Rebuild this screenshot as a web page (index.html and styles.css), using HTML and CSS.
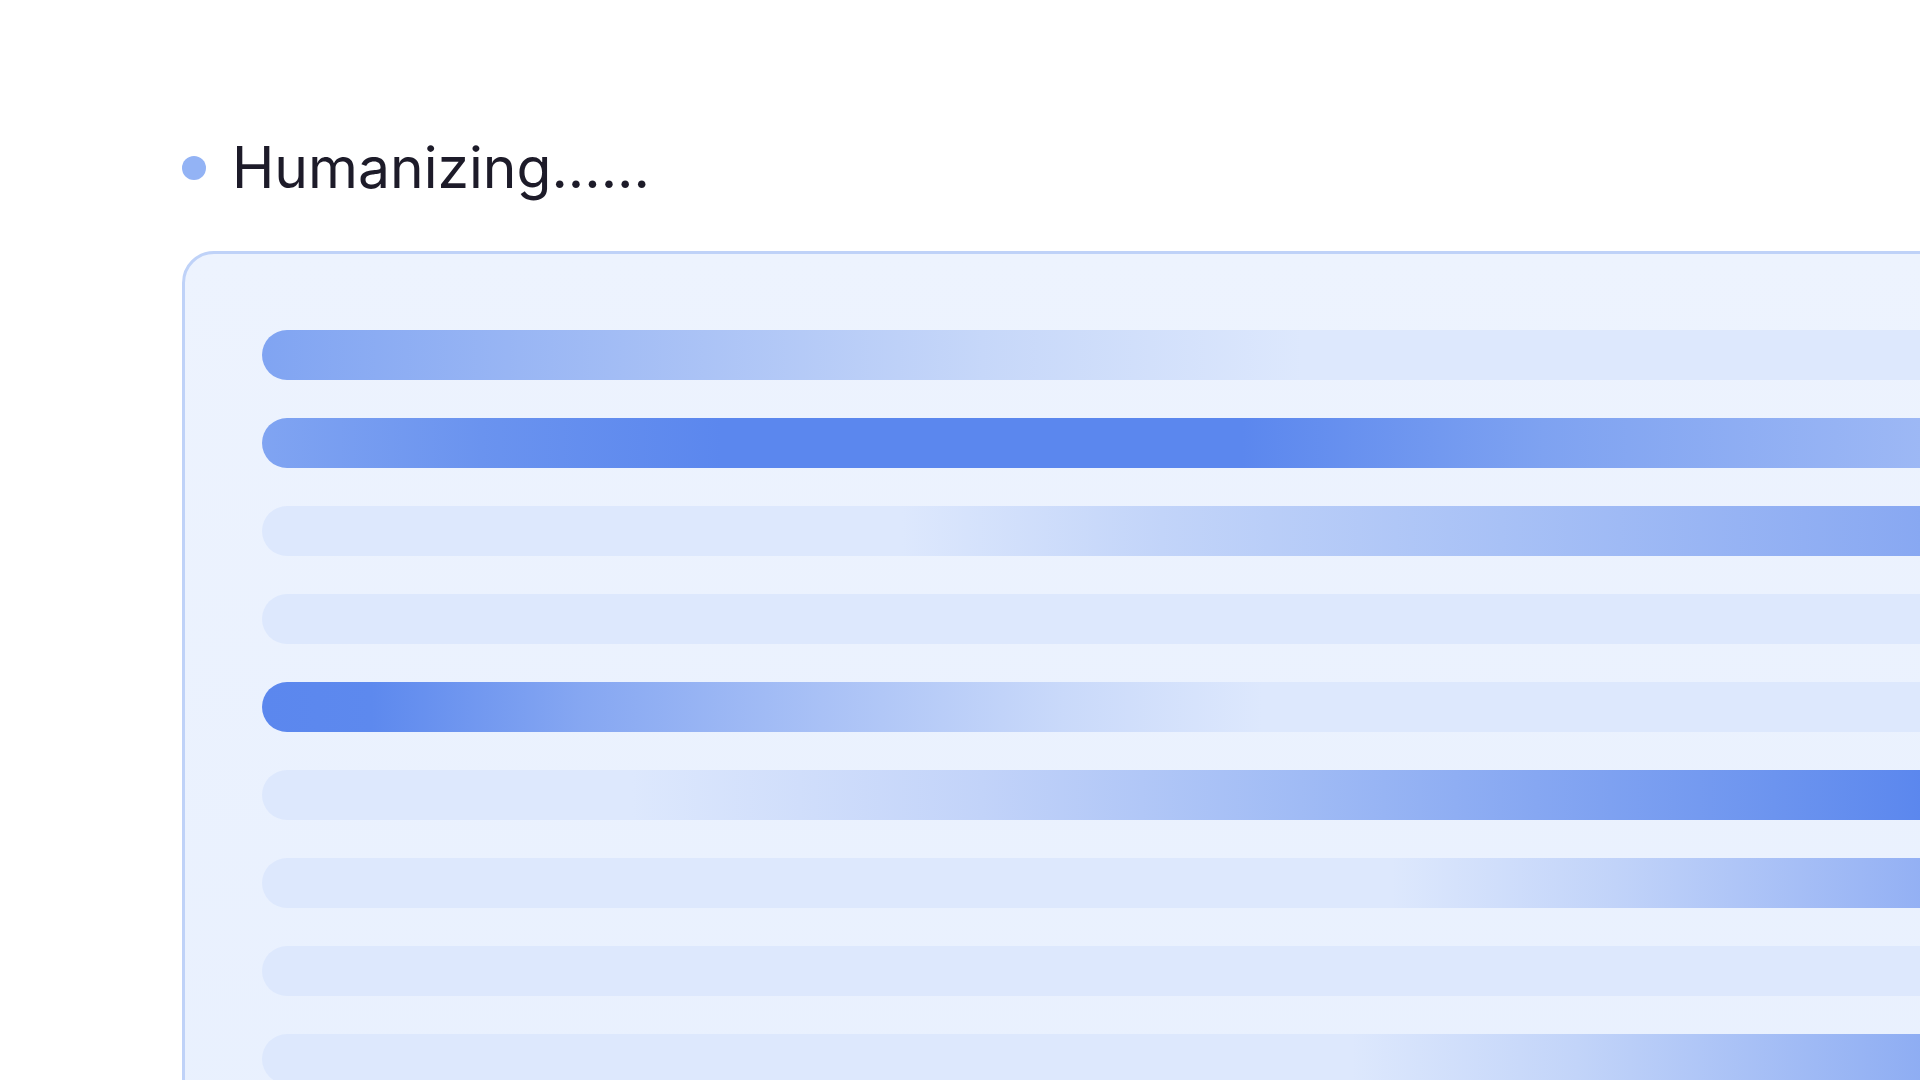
FILE: index.html
```html
<!DOCTYPE html>
<html lang="en">
<head>
<meta charset="utf-8">
<title>Humanizing</title>
<link rel="stylesheet" href="styles.css">
</head>
<body>
<main class="page">
  <div class="status">
    <span class="status-dot"></span>
    <span class="status-text">Humanizing......</span>
  </div>
  <section class="card">
    <div class="bar bar-1"></div>
    <div class="bar bar-2"></div>
    <div class="bar bar-3"></div>
    <div class="bar bar-4"></div>
    <div class="bar bar-5"></div>
    <div class="bar bar-6"></div>
    <div class="bar bar-7"></div>
    <div class="bar bar-8"></div>
    <div class="bar bar-9"></div>
  </section>
</main>
</body>
</html>
```

FILE: styles.css
```css
html, body {
  margin: 0;
  padding: 0;
  background: #ffffff;
  overflow: hidden;
  width: 1920px;
  height: 1080px;
}

.page {
  padding: 140px 0 0 182px;
  font-family: Inter, "Noto Sans", sans-serif;
}

.status {
  display: flex;
  align-items: center;
  gap: 26px;
  height: 56px;
}

.status-dot {
  width: 24px;
  height: 24px;
  border-radius: 50%;
  background: #93b3f5;
  flex: none;
}

.status-text {
  font-size: 57px;
  line-height: 56px;
  color: #1d1b29;
  font-weight: 400;
  letter-spacing: 0;
}

.card {
  margin-top: 55px;
  width: 2000px;
  height: 1000px;
  box-sizing: border-box;
  border: 3px solid #bfd2f8;
  border-radius: 32px;
  background: linear-gradient(180deg, #edf3fe 0%, #e8f0fe 100%);
  padding: 76px 80px 0 77px;
  display: flex;
  flex-direction: column;
  gap: 38px;
}

.bar {
  height: 50px;
  border-radius: 25px;
  background: #dde8fd;
  flex: none;
}

.bar-1 {
  background: linear-gradient(90deg, #80a4f2 0px, #a3bdf5 360px, #c6d7f9 720px, #dde8fd 1040px, #dde8fd 100%);
}

.bar-2 {
  background: linear-gradient(90deg, #80a4f2 0px, #6a93ef 220px, #5b87ee 460px, #5b87ee 980px, #7ea2f1 1280px, #9db8f5 1660px, #b0c6f7 100%);
}

.bar-3 {
  background: linear-gradient(90deg, #dde8fd 0px, #dde8fd 640px, #c2d4f9 900px, #a8c1f6 1240px, #88a8f2 1660px, #7ea2f1 100%);
}

.bar-4 {
  background: #dde8fd;
}

.bar-5 {
  background: linear-gradient(90deg, #5b87ee 0px, #5d89ee 110px, #86a7f2 320px, #a9c1f6 560px, #c9d9fa 800px, #dde8fd 1000px, #dde8fd 100%);
}

.bar-6 {
  background: linear-gradient(90deg, #dde8fd 0px, #dde8fd 370px, #c2d3f9 720px, #a0bbf5 1040px, #86a7f2 1275px, #6c94ef 1512px, #5b87ee 1660px, #5b87ee 100%);
}

.bar-7 {
  background: linear-gradient(90deg, #dde8fd 0px, #dde8fd 1130px, #c1d3f9 1354px, #93b0f4 1660px, #86a7f2 100%);
}

.bar-8 {
  background: #dde8fd;
}

.bar-9 {
  background: linear-gradient(90deg, #dde8fd 0px, #dde8fd 1090px, #c2d4f9 1315px, #8eadf3 1660px, #82a5f2 100%);
}
```
